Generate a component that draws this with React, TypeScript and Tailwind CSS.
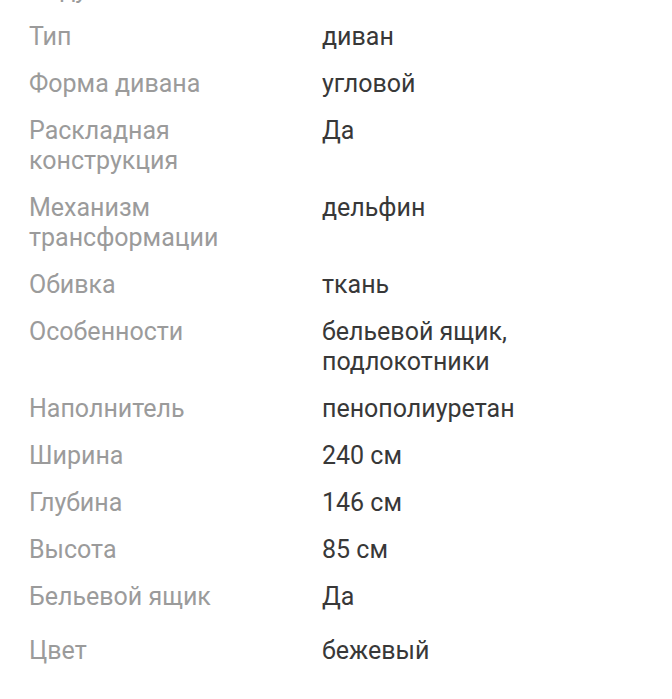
import React from 'react';

const specs: [string, string, string?][] = [
    ['Подушки', ''],
    ['Тип', 'диван'],
    ['Форма дивана', 'угловой'],
    ['Раскладная конструкция', 'Да'],
    ['Механизм трансформации', 'дельфин'],
    ['Обивка', 'ткань'],
    ['Особенности', 'бельевой ящик, подлокотники'],
    ['Наполнитель', 'пенополиуретан'],
    ['Ширина', '240 см'],
    ['Глубина', '146 см'],
    ['Высота', '85 см'],
    ['Бельевой ящик', 'Да'],
    ['Цвет', 'бежевый', 'last'],
];

export default function App() {
    return (
        <div className="min-h-screen bg-white overflow-hidden" style={{ fontFamily: 'Roboto, "Noto Sans", sans-serif' }}>
            <div className="flex flex-col gap-[17px] -mt-[25px] pl-[29px] pr-4 text-[25px] leading-[30px]">
                {specs.map(([label, value, last]) => (
                    <div key={label} className={`flex ${last ? 'mt-[7px]' : ''}`}>
                        <div className="w-[293px] shrink-0 pr-[50px] text-[#9b9b9b]">{label}</div>
                        <div className="w-[230px] text-[#383838]">{value}</div>
                    </div>
                ))}
            </div>
        </div>
    );
}
